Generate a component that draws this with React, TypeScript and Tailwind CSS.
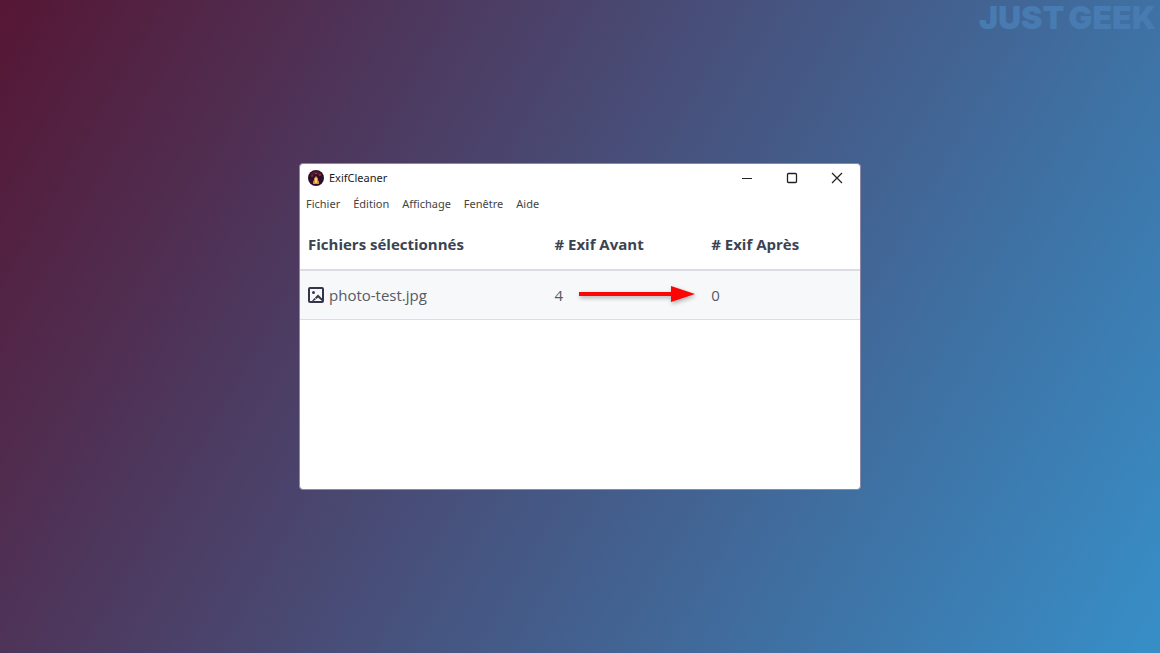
const menus = ["Fichier", "Édition", "Affichage", "Fenêtre", "Aide"];
const files = [{ name: "photo-test.jpg", before: 4, after: 0 }];

function AppLogo() {
  return (
    <svg width="16" height="16" viewBox="0 0 16 16" aria-hidden="true">
      <circle cx="8" cy="8" r="8" fill="#2d0c2c" />
      <path d="M2 4.500A7 7 0 0 1 14 4.500L11 6 8 4 5 6Z" fill="#52162f" />
      <path d="M6 8.500 8 6l2 2.500v1.500l1 1.500V14H5v-2.500L6 10Z" fill="#d98d3c" />
      <path d="M7 8h2v5H7Z" fill="#f8cf6a" />
      <circle cx="4" cy="6" r=".7" fill="#b8683c" />
      <circle cx="12" cy="5" r=".7" fill="#b8683c" />
      <circle cx="8" cy="3.500" r=".7" fill="#b8683c" />
    </svg>
  );
}

function ImageIcon() {
  return (
    <svg width="16" height="16" viewBox="0 0 16 16" fill="none" aria-hidden="true">
      <rect x="1" y="1" width="14" height="14" rx="1" stroke="#34374b" strokeWidth="2" />
      <circle cx="5.500" cy="5.500" r="1.500" fill="#34374b" />
      <path d="M4 14 6.500 11 8 12.200 5.500 14ZM7 10.500 10 7.500l4 4v2.500l-4-3.500-1.500 1.500Z" fill="#34374b" />
    </svg>
  );
}

function Arrow() {
  return (
    <svg
      className="absolute top-0 left-6 drop-shadow-[1px_2px_2px_rgba(0,0,0,0.3)]"
      width="118"
      height="18"
      viewBox="0 0 118 18"
      aria-hidden="true"
    >
      <path d="M1 7h92V1l24 8-24 8v-6H1Z" fill="#fb0505" />
    </svg>
  );
}

export default function App() {
  return (
    <div className="relative flex min-h-screen items-center justify-center bg-[linear-gradient(120deg,#561634,#378fc8)] font-['Open_Sans','Noto_Sans',sans-serif]">
      <p className="absolute top-0 right-1 flex gap-1 font-['Inter',sans-serif] text-[32px] leading-9 font-black text-[#487bb2]">
        <span>JUST</span>
        <span>GEEK</span>
      </p>
      <main className="flex min-h-[327px] w-full max-w-[562px] flex-col rounded-sm border border-[#8d86a5] bg-white">
        <header className="flex h-7 items-center justify-between pl-2">
          <div className="flex items-center gap-[5px]">
            <AppLogo />
            <h1 className="font-['Noto_Sans',sans-serif] text-[11px] leading-4 text-[#1b1b1b]">ExifCleaner</h1>
          </div>
          <div className="flex pr-px text-[#222]">
            <button aria-label="Réduire" className="flex h-7 w-[45px] items-center justify-center">
              <svg width="12" height="12" viewBox="0 0 12 12" stroke="currentColor"><path d="M1 6.500h10" /></svg>
            </button>
            <button aria-label="Agrandir" className="flex h-7 w-[45px] items-center justify-center">
              <svg width="12" height="12" viewBox="0 0 12 12" fill="none" stroke="currentColor" strokeWidth="1.300"><rect x="1.500" y="1.500" width="9" height="9" rx="1" /></svg>
            </button>
            <button aria-label="Fermer" className="flex h-7 w-[45px] items-center justify-center">
              <svg width="12" height="12" viewBox="0 0 12 12" stroke="currentColor" strokeWidth="1.200"><path d="m1 1 10 10M11 1 1 11" /></svg>
            </button>
          </div>
        </header>
        <nav className="flex h-6 items-center gap-[13px] px-1.5 font-['Noto_Sans',sans-serif] text-[11px] leading-4 text-[#444]">
          {menus.map((m) => (
            <button key={m}>{m}</button>
          ))}
        </nav>
        <table className="mt-1 w-full table-fixed text-left text-[#3b4351]">
          <colgroup>
            <col className="w-[44%]" />
            <col className="w-[28%]" />
            <col className="w-[28%]" />
          </colgroup>
          <thead>
            <tr className="h-[50px] border-b-2 border-[#dadee4] text-[15px]">
              <th className="px-2 font-bold">Fichiers sélectionnés</th>
              <th className="px-2 font-bold"># Exif Avant</th>
              <th className="px-2 font-bold"># Exif Après</th>
            </tr>
          </thead>
          <tbody>
            {files.map((f) => (
              <tr key={f.name} className="h-[49px] border-b border-[#dadee4] bg-[#f7f8f9] text-[15px] text-[#555a66]">
                <td className="px-2">
                  <span className="flex items-center gap-[5px]">
                    <ImageIcon />
                    {f.name}
                  </span>
                </td>
                <td className="px-2">
                  <span className="relative">
                    {f.before}
                    <Arrow />
                  </span>
                </td>
                <td className="px-2">{f.after}</td>
              </tr>
            ))}
          </tbody>
        </table>
      </main>
    </div>
  );
}
